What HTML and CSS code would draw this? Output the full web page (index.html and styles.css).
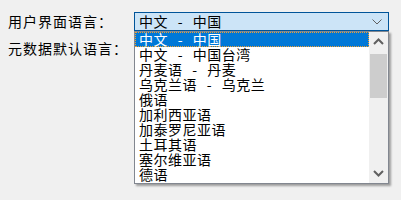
FILE: index.html
```html
<!DOCTYPE html>
<html>
  <head>
    <title>语言设置</title>
    <link rel="stylesheet" href="styles.css">
  </head>
  <body>
    <div class="settings">
      <div class="row">
        <label class="label">用户界面语言：</label>
        <div class="field">
          <div class="combo open">
            <span class="combo-value">中文 - 中国</span>
            <svg class="combo-arrow" width="10" height="6" viewBox="0 0 10 6">
              <path d="M0.5 0.5 L5 5 L9.5 0.5" fill="none" stroke="#606060" stroke-width="1"/>
            </svg>
          </div>

          <div class="dropdown">
            <ul class="options">
              <li class="option selected">中文 - 中国</li>
              <li class="option">中文 - 中国台湾</li>
              <li class="option">丹麦语 - 丹麦</li>
              <li class="option">乌克兰语 - 乌克兰</li>
              <li class="option">俄语</li>
              <li class="option">加利西亚语</li>
              <li class="option">加泰罗尼亚语</li>
              <li class="option">土耳其语</li>
              <li class="option">塞尔维亚语</li>
              <li class="option">德语</li>
            </ul>
            <div class="scrollbar">
              <div class="scroll-btn">
                <svg width="11" height="7" viewBox="0 0 11 7">
                  <path d="M1 6 L5.5 1.5 L10 6" fill="none" stroke="#606060" stroke-width="2"/>
                </svg>
              </div>
              <div class="track">
                <div class="thumb"></div>
              </div>
              <div class="scroll-btn">
                <svg width="11" height="7" viewBox="0 0 11 7">
                  <path d="M1 1 L5.5 5.5 L10 1" fill="none" stroke="#606060" stroke-width="2"/>
                </svg>
              </div>
            </div>
          </div>
        </div>
      </div>

      <div class="row">
        <label class="label">元数据默认语言：</label>
        <div class="field">
          <div class="combo">
            <span class="combo-value">中文 - 中国</span>
          </div>
        </div>
      </div>
    </div>
  </body>
</html>
```

FILE: styles.css
```css
html,
body {
  height: 100%;
}

body {
  margin: 0;
  padding: 0;
  background-color: #f0f0f0;
  font-family: "Noto Sans CJK SC", "Noto Sans", sans-serif;
  font-size: 14px;
  color: #000;
}

.settings {
  padding: 12px 0 0 8px;
  display: flex;
  flex-direction: column;
  gap: 8px;
}

.row {
  display: flex;
  align-items: center;
}

.label {
  width: 126px;
  line-height: 19px;
  letter-spacing: 1px;
}

.field {
  position: relative;
}

.combo {
  width: 249px;
  height: 17px;
  padding-left: 4px;
  border: 1px solid #adadad;
  background-color: #e1e1e1;
  display: flex;
  align-items: center;
  justify-content: space-between;
}

.combo.open {
  background-color: #cce4f7;
  border-color: #005499;
}

.combo-value {
  line-height: 17px;
  white-space: pre;
  letter-spacing: 0.5px;
  word-spacing: 6px;
}

.combo-arrow {
  margin-right: 6px;
}

/* the open list lies over the next row */
.dropdown {
  position: absolute;
  top: 19px;
  left: 0;
  width: 253px;
  height: 151px;
  border: 1px solid #828790;
  background-color: #fff;
  box-shadow: 2px 2px 2px rgba(0, 0, 0, 0.35);
  display: flex;
  z-index: 10;
}

.options {
  list-style: none;
  margin: 0;
  padding: 0;
  flex: 1;
  overflow: hidden;
}

.option {
  height: 15px;
  line-height: 15px;
  padding-left: 4px;
  white-space: pre;
  letter-spacing: 0.5px;
  word-spacing: 6px;
}

.option.selected {
  background-color: #0078d7;
  color: #fff;
  outline: 1px dotted #f0a030;
  outline-offset: -1px;
}

.scrollbar {
  width: 19px;
  background-color: #f0f0f0;
  display: flex;
  flex-direction: column;
}

.scroll-btn {
  height: 19px;
  display: flex;
  align-items: center;
  justify-content: center;
}

.track {
  flex: 1;
}

.thumb {
  margin: 3px 1px 0 1px;
  height: 44px;
  background-color: #cdcdcd;
}
```
